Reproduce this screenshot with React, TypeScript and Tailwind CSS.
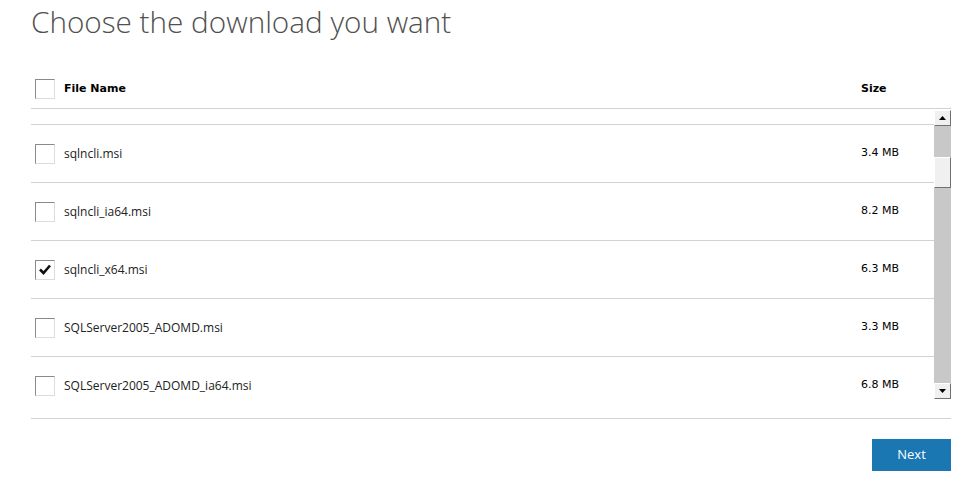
import React from "react";

interface FileRow {
  name: string;
  size: string;
  checked?: boolean;
}

const files: FileRow[] = [
  { name: "sqlncli.msi", size: "3.4 MB" },
  { name: "sqlncli_ia64.msi", size: "8.2 MB" },
  { name: "sqlncli_x64.msi", size: "6.3 MB", checked: true },
  { name: "SQLServer2005_ADOMD.msi", size: "3.3 MB" },
  { name: "SQLServer2005_ADOMD_ia64.msi", size: "6.8 MB" },
];

function Checkbox({ checked }: { checked?: boolean }) {
  return (
    <div className="w-5 h-5 shrink-0 bg-white border border-t-[#8a8a8a] border-l-[#8a8a8a] border-r-[#dcdcdc] border-b-[#dcdcdc] flex items-center justify-center">
      {checked && (
        <svg width="12" height="11" viewBox="0 0 12 11">
          <path d="M1 5.5 L4.5 9 L11 1.5" fill="none" stroke="#111" strokeWidth="2.6" />
        </svg>
      )}
    </div>
  );
}

function Scrollbar() {
  return (
    <div className="w-[17px] shrink-0 bg-[#c8c8c8] flex flex-col">
      <div className="h-4 bg-[#f0f0f0] border border-t-white border-l-white border-r-[#707070] border-b-[#707070] flex items-center justify-center">
        <svg width="7" height="4" viewBox="0 0 7 4">
          <path d="M0 4 L3.5 0 L7 4 Z" fill="#000" />
        </svg>
      </div>
      <div className="h-[31px] mt-[31px] bg-[#f0f0f0] border border-t-white border-l-white border-r-[#707070] border-b-[#707070]" />
      <div className="flex-1" />
      <div className="h-4 bg-[#f0f0f0] border border-t-white border-l-white border-r-[#707070] border-b-[#707070] flex items-center justify-center">
        <svg width="7" height="4" viewBox="0 0 7 4">
          <path d="M0 0 L3.5 4 L7 0 Z" fill="#000" />
        </svg>
      </div>
    </div>
  );
}

export default function App() {
  return (
    <div className="w-[971px] h-[487px] bg-white pl-[31px] pr-5 pt-[2px] font-['Open_Sans',sans-serif]">
      <h1 className="text-[29.7px] leading-[40px] font-light text-[#505050]">
        Choose the download you want
      </h1>

      {/* Header */}
      <div className="mt-[26px] h-[41px] border-b border-[#d2d2d2] flex items-center pl-1 pt-[2px] font-['DejaVu_Sans',sans-serif] text-[11px] font-bold text-black">
        <Checkbox />
        <span className="ml-[9px] flex-1">File Name</span>
        <span className="w-[90px]">Size</span>
      </div>

      {/* Scrolling list */}
      <div className="flex h-[289px] mt-px">
        <div className="flex-1 overflow-hidden">
          <div className="h-[15px] border-b border-[#d2d2d2]" />
          {files.map((f) => (
            <div
              key={f.name}
              className="h-[58px] shrink-0 border-b border-[#d2d2d2] flex items-center pl-1"
            >
              <Checkbox checked={f.checked} />
              <span className="ml-[9px] flex-1 text-[12px] text-[#222]">{f.name}</span>
              <span className="w-[73px] font-['DejaVu_Sans',sans-serif] text-[11px] text-black">
                {f.size}
              </span>
            </div>
          ))}
        </div>
        <Scrollbar />
      </div>

      <div className="mt-[19px] border-t border-[#d2d2d2]" />

      <div className="flex justify-end mt-5">
        <button className="w-[79px] h-[32px] bg-[#1a77b2] text-white text-[13px]">Next</button>
      </div>
    </div>
  );
}
